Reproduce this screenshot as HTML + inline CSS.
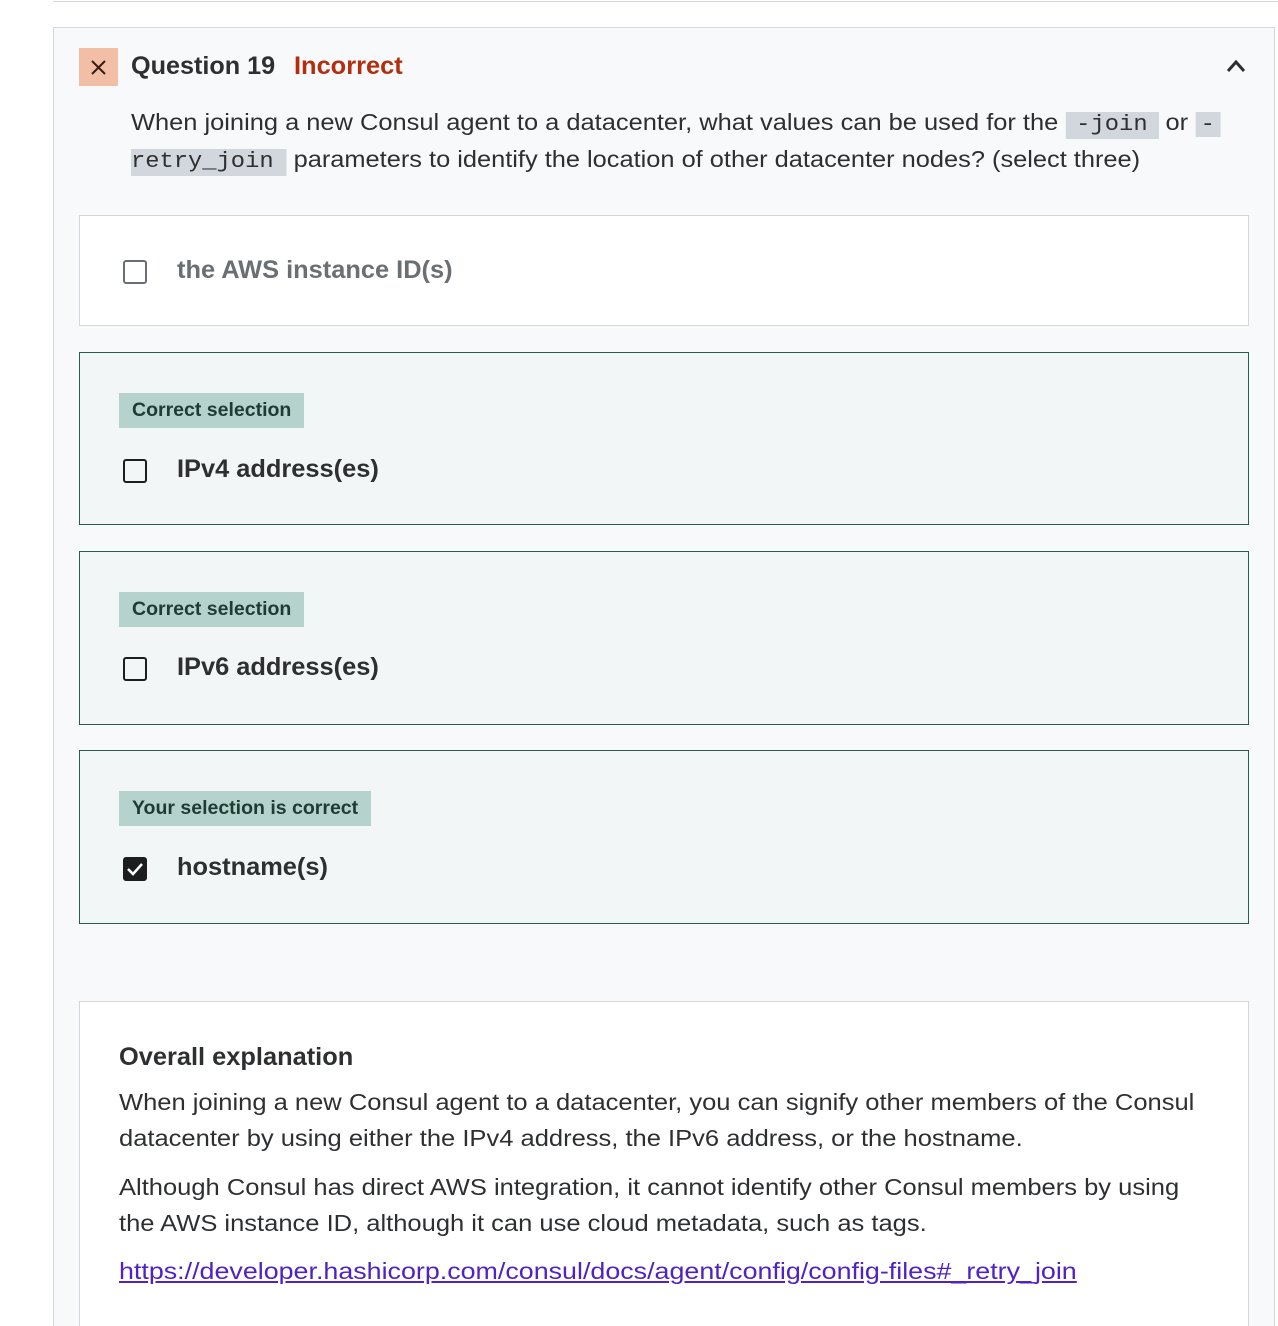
<!DOCTYPE html>
<html><head><meta charset="utf-8"><style>
*{margin:0;padding:0;box-sizing:border-box}
html,body{width:1278px;height:1326px;overflow:hidden}
body{background:#fff;position:relative;font-family:"Liberation Sans",sans-serif;color:#2d2f31}
.a{position:absolute;white-space:nowrap;transform-origin:0 50%}
.card{position:absolute;left:53px;top:27px;width:1222px;height:1299px;background:#f7f9fa;border:1px solid #d1d7dc;border-bottom:none}
.top{position:absolute;left:53px;top:0;width:1225px;height:2px;border-bottom:1px solid #d1d7dc}
.opt{position:absolute;left:79px;width:1170px;border:1px solid #d1d7dc;background:#fff}
.ok{background:#f3f6f6;border-color:#2a5c4b}
.tag{position:absolute;left:39px;height:35px;background:#b5d2cc;color:#1f3c34;font-weight:bold;font-size:19.5px;line-height:35px;padding:0 13px;white-space:nowrap}
.cb{position:absolute;left:43px;width:24px;height:24px;border:2px solid #1c1d1f;border-radius:3px;background:transparent}
.lbl{position:absolute;left:97px;font-weight:bold;font-size:25.4px;white-space:nowrap}
code{font-family:"Liberation Mono",monospace;background:#d1d7dc;padding:0 10px 2px;font-size:22px}
.p{font-size:23.5px;line-height:36px}
</style></head><body>
<div class="top"></div>
<div class="card"></div>
<div class="a" style="left:79px;top:48px;width:39px;height:38px;background:#f2bfa6;text-align:center">
<svg width="39" height="38" viewBox="0 0 39 38"><path d="M13 13L26 26M26 13L13 26" stroke="#3a1c12" stroke-width="2"/></svg></div>
<div class="a" style="left:131px;top:52px;font-size:25.2px;font-weight:bold;color:#2d2f31">Question 19</div>
<div class="a" style="left:294px;top:52px;font-size:25.4px;font-weight:bold;color:#b32d0f">Incorrect</div>
<svg class="a" style="left:1226px;top:58px" width="20" height="16" viewBox="0 0 20 16"><path d="M2 13L10 4L18 13" fill="none" stroke="#2d2f31" stroke-width="3"/></svg>
<div class="a p" style="left:131px;top:104px;transform:scaleX(1.082)">When joining a new Consul agent to a datacenter, what values can be used for the <code>-join</code> or <code style="padding:0 5px">-</code></div>
<div class="a p" style="left:131px;top:141px;transform:scaleX(1.08)"><code style="padding:0 12px 2px 0">retry_join</code> parameters to identify the location of other datacenter nodes? (select three)</div>

<div class="opt" style="top:215px;height:111px">
<div class="cb" style="top:44px;border-color:#6a6f73"></div>
<div class="lbl" style="top:40px;color:#6a6f73">the AWS instance ID(s)</div></div>

<div class="opt ok" style="top:352px;height:173px">
<div class="tag" style="top:40px">Correct selection</div>
<div class="cb" style="top:106px"></div>
<div class="lbl" style="top:102px">IPv4 address(es)</div></div>

<div class="opt ok" style="top:551px;height:174px">
<div class="tag" style="top:40px">Correct selection</div>
<div class="cb" style="top:105px"></div>
<div class="lbl" style="top:101px">IPv6 address(es)</div></div>

<div class="opt ok" style="top:750px;height:174px">
<div class="tag" style="top:40px">Your selection is correct</div>
<div class="cb" style="top:106px;background:#1c1d1f"><svg width="20" height="20" viewBox="0 0 20 20" style="display:block"><path d="M3 10L8 15L17 5" fill="none" stroke="#fff" stroke-width="2.5"/></svg></div>
<div class="lbl" style="top:102px">hostname(s)</div></div>

<div class="opt" style="top:1001px;height:325px;border-bottom:none"></div>
<div class="a" style="left:119px;top:1043px;font-size:25.4px;font-weight:bold">Overall explanation</div>
<div class="a p" style="left:119px;top:1084px;transform:scaleX(1.086)">When joining a new Consul agent to a datacenter, you can signify other members of the Consul</div>
<div class="a p" style="left:119px;top:1120px;transform:scaleX(1.086)">datacenter by using either the IPv4 address, the IPv6 address, or the hostname.</div>
<div class="a p" style="left:119px;top:1169px;transform:scaleX(1.086)">Although Consul has direct AWS integration, it cannot identify other Consul members by using</div>
<div class="a p" style="left:119px;top:1205px;transform:scaleX(1.086)">the AWS instance ID, although it can use cloud metadata, such as tags.</div>
<div class="a p" style="left:119px;top:1253px;color:#5022c3;text-decoration:underline;transform:scaleX(1.142)">https://developer.hashicorp.com/consul/docs/agent/config/config-files#_retry_join</div>
</body></html>
